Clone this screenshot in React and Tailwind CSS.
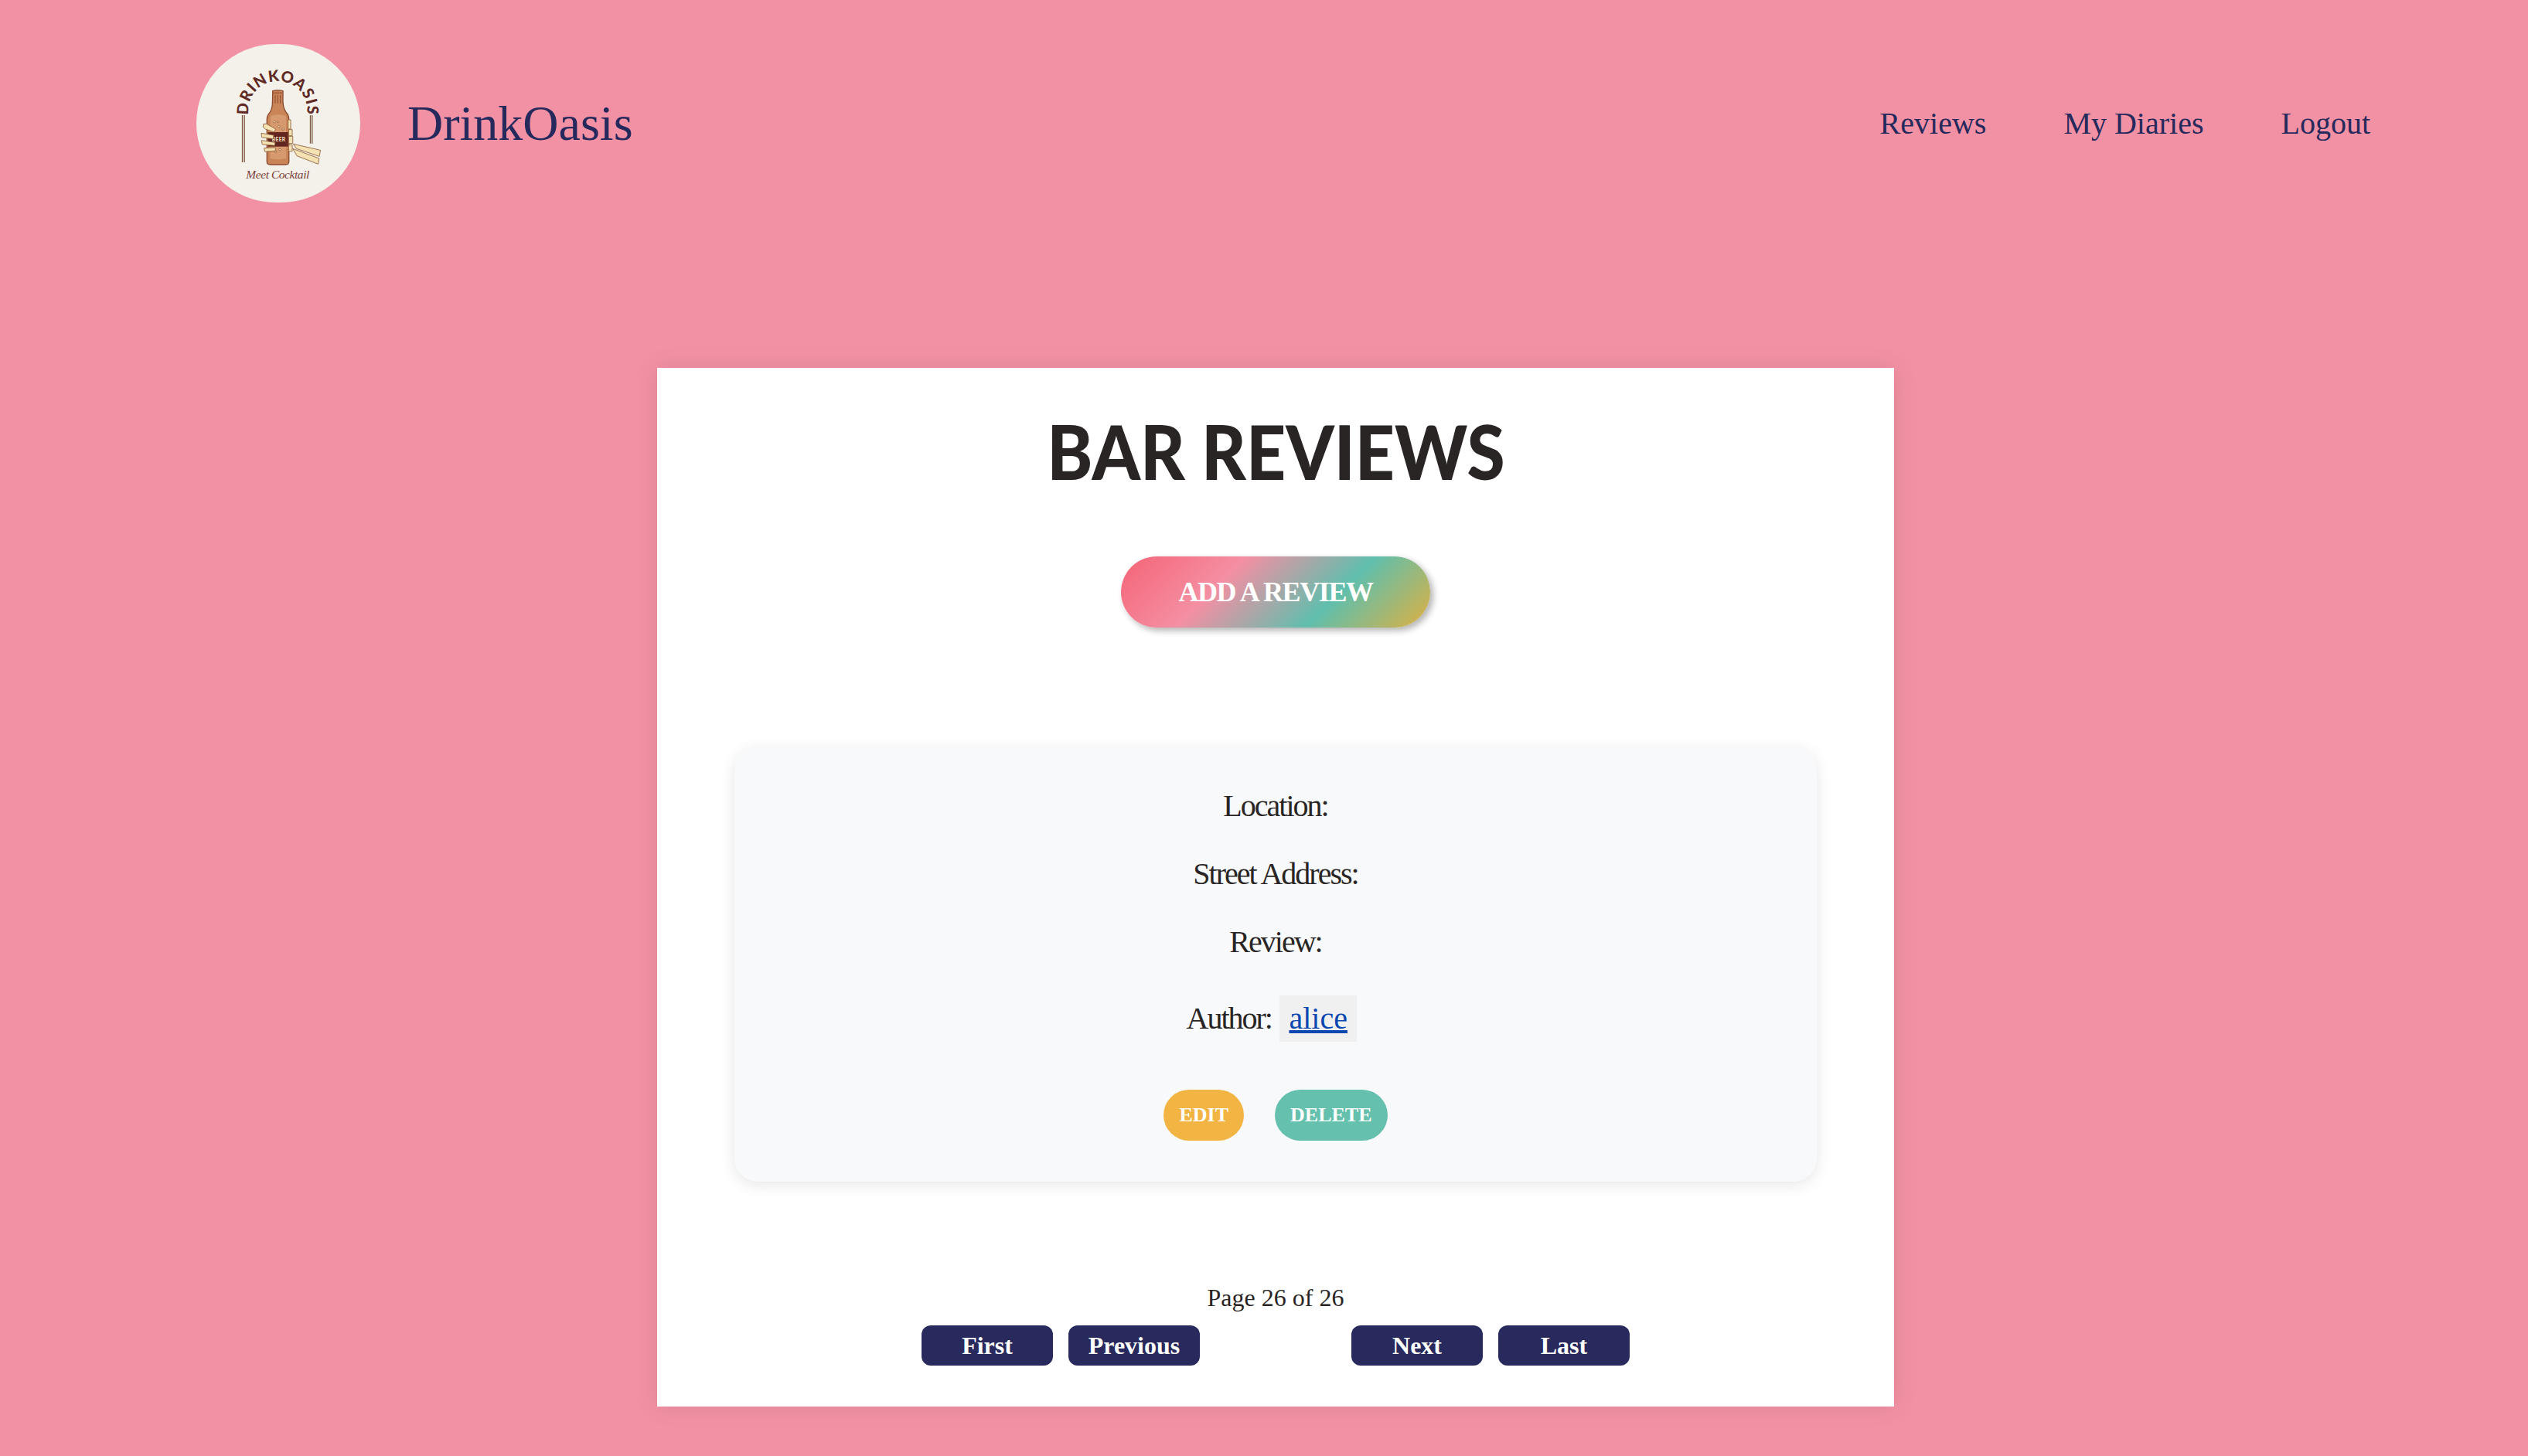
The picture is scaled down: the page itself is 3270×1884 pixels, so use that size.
import React from 'react';

const serif = "font-['Liberation_Serif','Times_New_Roman',serif]";

const Logo = () => (
  <div className="w-[212px] h-[205px] rounded-full bg-[#f4f1ea] shrink-0">
    <svg viewBox="73 82 634 615" className="w-full h-full" preserveAspectRatio="none">
      <defs>
        <path id="logo-arc" d="M 278 370 A 114 114 0 1 1 498 370" fill="none" />
      </defs>
      <text fontFamily="Lato, sans-serif" fontWeight="900" fontSize="60" fill="#5f2a24" letterSpacing="3">
        <textPath href="#logo-arc" startOffset="50%" textAnchor="middle">DRINKOASIS</textPath>
      </text>
      {/* side rails */}
      <path d="M251 358V541M259 358V541M514 358V468M521 358V468" stroke="#7d5a43" strokeWidth="4" fill="none" />
      {/* bottle */}
      <path
        d="M368 264Q387 258 408 264L408 282Q407 300 409 318Q412 340 426 354Q431 362 431 376L431 538Q431 550 418 550L358 550Q346 550 346 538L346 376Q346 362 352 354Q366 338 367 316Q368 298 368 282Z"
        fill="#c98558"
        stroke="#8a4a30"
        strokeWidth="4"
      />
      <path d="M360 362Q388 350 420 362L420 525Q388 535 358 525Z" fill="#d69a6e" />
      <path d="M378 280V312M388 280V312M398 280V312" stroke="#8a4a30" strokeWidth="3" />
      <path d="M368 272H408" stroke="#a8623f" strokeWidth="6" />
      <g fill="#f3dfb8" stroke="#8a4a30" strokeWidth="2">
        <circle cx="376" cy="384" r="4" />
        <circle cx="392" cy="402" r="4" />
        <circle cx="408" cy="412" r="4" />
        <circle cx="388" cy="384" r="3" />
        <circle cx="396" cy="492" r="4" />
        <circle cx="380" cy="500" r="3" />
      </g>
      {/* label */}
      <rect x="350" y="424" width="78" height="56" fill="#63251f" />
      <text x="392" y="460" textAnchor="middle" fontFamily="Lato, sans-serif" fontWeight="900" fontSize="20" letterSpacing="1" fill="#f3dfb8">BEER</text>
      {/* fingers */}
      <g fill="#f5e2b2" stroke="#8a5a38" strokeWidth="2.5" strokeLinejoin="round">
        <path d="M333 392L345 392L380 412L374 424L340 412L331 404Z" />
        <path d="M324 428L372 436L370 450L326 444Z" />
        <path d="M325 456L378 464L376 476L328 472Z" />
        <path d="M335 486L378 484L380 496L338 500Z" />
        <path d="M428 376H438V412H428Z" />
        <path d="M430 414H444V438H430Z" />
        <path d="M430 440H446V468H430Z" />
        <path d="M430 474H444V498H430Z" />
        <path d="M448 470L553 494L549 518L460 488Z" />
        <path d="M446 488L548 526L544 548L462 516Z" />
      </g>
      <text x="388" y="604" textAnchor="middle" textLength="245" fontFamily="'Liberation Serif', serif" fontStyle="italic" fontSize="46" fill="#7a4038">Meet Cocktail</text>
    </svg>
  </div>
);

const Header = () => (
  <header className={`flex items-center justify-between pl-[254px] pr-[204px] pt-[57px] ${serif} text-[#26295c]`}>
    <div className="flex items-center gap-[61px]">
      <Logo />
      <a href="#" className="text-[64px] leading-[74px]">DrinkOasis</a>
    </div>
    <nav className="flex items-center gap-[100px] text-[40px] leading-[46px]">
      <a href="#">Reviews</a>
      <a href="#">My Diaries</a>
      <a href="#">Logout</a>
    </nav>
  </header>
);

const ReviewCard = () => (
  <div className="w-[1400px] h-[562px] mt-[155px] pt-[53px] rounded-[30px] bg-[#f8f9fa] shadow-[0_4px_20px_rgba(0,0,0,0.1)] flex flex-col items-center text-[40px] leading-[46px] tracking-[-2px] text-[#292524]">
    <p>Location:</p>
    <p className="mt-[42px]">Street Address:</p>
    <p className="mt-[42px]">Review:</p>
    <p className="mt-[46px] mr-[10px] flex items-center gap-[10px]">
      Author:
      <a href="#" className="px-[12.5px] h-[60px] leading-[60px] bg-[#f0f0f0] text-[#0a47b0] underline tracking-normal">alice</a>
    </p>
    <div className="mt-[62px] flex gap-[40px] text-[26px] leading-[30px] font-bold text-white tracking-normal">
      <button className="h-[66px] px-[20px] rounded-[33px] bg-[#f2b544]">EDIT</button>
      <button className="h-[66px] px-[20px] rounded-[33px] bg-[#65c0ae]">DELETE</button>
    </div>
  </div>
);

const PageButton = ({ label }) => (
  <button className="w-[170px] h-[52px] rounded-[12px] bg-[#28295c] text-white font-bold text-[32px] leading-[36px]">{label}</button>
);

const App = () => (
  <div className={`min-h-screen bg-[#f391a4] ${serif}`}>
    <Header />
    <div className="flex justify-center pl-[30px] pt-[214px] pb-[64px]">
      <main className="w-[1600px] h-[1344px] bg-white shadow-[0_0_30px_rgba(0,0,0,0.1)] flex flex-col items-center">
        <h1 className="mt-[48px] scale-x-[0.91] font-['Lato',sans-serif] font-black text-[98px] leading-[118px] text-[#292524]">BAR REVIEWS</h1>
        <button className="mt-[78px] w-[400px] h-[92px] rounded-[46px] bg-[linear-gradient(135deg,#f56476_0%,#f48fa3_33%,#5fbfad_67%,#e0b040_100%)] shadow-[4px_4px_8px_rgba(0,0,0,0.3)] text-white font-bold text-[36px] tracking-[-1.4px]">
          ADD A REVIEW
        </button>
        <ReviewCard />
        <p className="mt-[132px] text-[32px] leading-[37px] text-[#292524]">Page 26 of 26</p>
        <div className="mt-[17px] flex gap-[20px]">
          <PageButton label="First" />
          <PageButton label="Previous" />
          <div className="w-[156px]" />
          <PageButton label="Next" />
          <PageButton label="Last" />
        </div>
      </main>
    </div>
  </div>
);

export default App;
